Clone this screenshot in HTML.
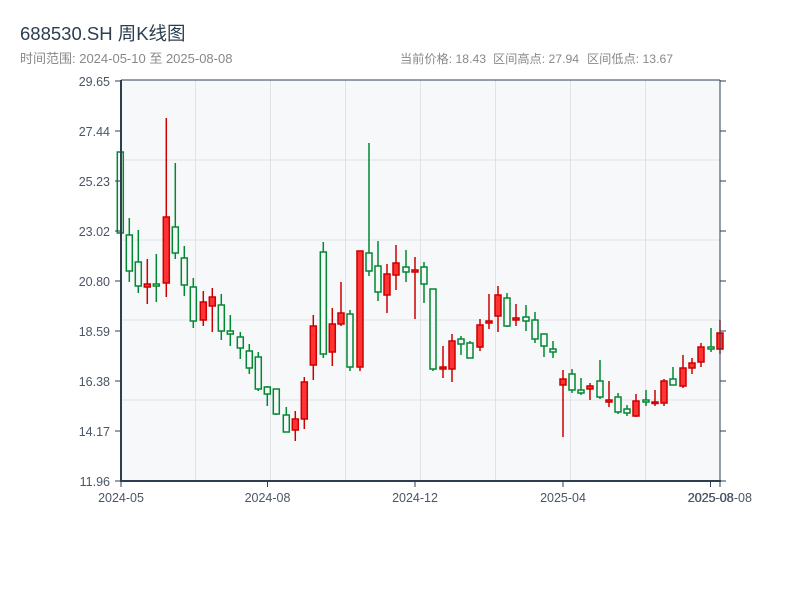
<!DOCTYPE html>
<html><head><meta charset="utf-8"><style>
html,body{margin:0;padding:0;background:#fff;width:800px;height:600px;overflow:hidden}
</style></head><body>
<svg width="800" height="600" xmlns="http://www.w3.org/2000/svg" style="position:absolute;left:0;top:0">
<text x="20" y="40" font-family="Liberation Sans, Noto Sans CJK SC, sans-serif" font-size="18.5" fill="#2c3e50">688530.SH 周K线图</text>
<text x="20" y="63" font-family="Liberation Sans, Noto Sans CJK SC, sans-serif" font-size="13" fill="#888">时间范围: 2024-05-10 至 2025-08-08</text>
<g font-family="Liberation Sans, Noto Sans CJK SC, sans-serif" font-size="12.2" fill="#888">
<text x="400" y="63">当前价格: 18.43</text>
<text x="493" y="63">区间高点: 27.94</text>
<text x="587" y="63">区间低点: 13.67</text>
</g>
<rect x="121" y="80" width="599" height="401" fill="#f7f8fa"/>
<g stroke="#e0e2e6" stroke-width="1">
<line x1="121" y1="160" x2="720" y2="160"/><line x1="121" y1="240" x2="720" y2="240"/><line x1="121" y1="320" x2="720" y2="320"/><line x1="121" y1="400" x2="720" y2="400"/>
<line x1="195.5" y1="80" x2="195.5" y2="481"/><line x1="270.5" y1="80" x2="270.5" y2="481"/><line x1="345.5" y1="80" x2="345.5" y2="481"/><line x1="420.5" y1="80" x2="420.5" y2="481"/><line x1="495.5" y1="80" x2="495.5" y2="481"/><line x1="570.5" y1="80" x2="570.5" y2="481"/><line x1="645.5" y1="80" x2="645.5" y2="481"/>
</g>
<g id="c"></g>
<g stroke="#2c3e50" fill="none">
<line x1="121" y1="80" x2="121" y2="482" stroke-width="2"/>
<line x1="120" y1="481" x2="721" y2="481" stroke-width="2"/>
<line x1="121" y1="80" x2="720" y2="80" stroke-width="1"/>
<line x1="720" y1="80" x2="720" y2="482" stroke-width="1"/>
</g>
<g stroke="#2c3e50" stroke-width="1">
<line x1="115" y1="81" x2="121" y2="81"/><line x1="115" y1="131" x2="121" y2="131"/><line x1="115" y1="181" x2="121" y2="181"/><line x1="115" y1="231" x2="121" y2="231"/><line x1="115" y1="281" x2="121" y2="281"/><line x1="115" y1="331" x2="121" y2="331"/><line x1="115" y1="381" x2="121" y2="381"/><line x1="115" y1="431" x2="121" y2="431"/><line x1="115" y1="481" x2="121" y2="481"/>
<line x1="720" y1="81" x2="726" y2="81"/><line x1="720" y1="131" x2="726" y2="131"/><line x1="720" y1="181" x2="726" y2="181"/><line x1="720" y1="231" x2="726" y2="231"/><line x1="720" y1="281" x2="726" y2="281"/><line x1="720" y1="331" x2="726" y2="331"/><line x1="720" y1="381" x2="726" y2="381"/><line x1="720" y1="431" x2="726" y2="431"/><line x1="720" y1="481" x2="726" y2="481"/>
<line x1="121" y1="481" x2="121" y2="487"/><line x1="267.5" y1="481" x2="267.5" y2="487"/><line x1="415" y1="481" x2="415" y2="487"/><line x1="563" y1="481" x2="563" y2="487"/><line x1="710.5" y1="481" x2="710.5" y2="487"/><line x1="720" y1="481" x2="720" y2="487"/>
</g>
<g font-family="Liberation Sans, sans-serif" font-size="12.5" fill="#4a5566" text-anchor="end">
<text x="110" y="86">29.65</text><text x="110" y="136">27.44</text><text x="110" y="186">25.23</text><text x="110" y="236">23.02</text><text x="110" y="286">20.80</text><text x="110" y="336">18.59</text><text x="110" y="386">16.38</text><text x="110" y="436">14.17</text><text x="110" y="486">11.96</text>
</g>
<g font-family="Liberation Sans, sans-serif" font-size="12.5" fill="#4a5566" text-anchor="middle">
<text x="121" y="502">2024-05</text><text x="267.5" y="502">2024-08</text><text x="415" y="502">2024-12</text><text x="563" y="502">2025-04</text><text x="710.5" y="502">2025-08</text><text x="720" y="502">2025-08-08</text>
</g>
</svg>
<script>
var d=[
[120.3,'G',152,233,152,233],[129.3,'G',235,271,218,282],[138.3,'G',262,286,230,293],[147.3,'R',284,287,259,304],[156.3,'G',284,286,254,302],[166.3,'R',217,283,118,297],[175.3,'G',227,253,163,259],[184.3,'G',258,285,246,296],[193.3,'G',287,321,278,328],[203.3,'R',302,320,291,326],[212.3,'R',297,306,288,332],[221.3,'G',305,331,294,340],[230.3,'G',331,334,315,346],[240.3,'G',337,348,332,359],[249.3,'G',351,368,344,374],[258.3,'G',357,389,352,391],[267.3,'G',387,394,386,406],[276.3,'G',389,414,389,415],[286.3,'G',415,432,407,432],[295.3,'R',419,430,411,441],[304.3,'R',382,419,377,429],[313.3,'R',326,365,315,380],[323.3,'G',252,354,242,358],[332.3,'R',324,352,308,366],[341,'R',313,324,282,326],[350,'G',314,367,310,371],[360,'R',251,367,251,371],[369,'G',253,271,143,276],[378,'G',266,292,241,301],[387,'R',274,295,264,313],[396,'R',263,275,245,290],[406,'G',267,272,250,282],[415,'R',270,272,257,319],[424,'G',267,284,262,303],[433,'G',289,369,289,371],[443,'R',367,369,346,378],[452,'R',341,369,334,382],[461,'G',339,344,336,355],[470,'G',343,358,341,358],[480,'R',325,347,319,351],[489,'R',321,323,294,329],[498,'R',295,316,286,332],[507,'G',298,326,293,327],[516,'R',318,320,304,326],[526,'G',317,321,305,331],[535,'G',320,339,312,343],[544,'G',334,346,334,357],[553,'G',349,352,341,358],
[563,'R',379,385,370,437],[572,'G',374,390,369,393],[581,'G',390,393,378,395],[590,'R',386,389,383,400],[600,'G',381,397,360,399],[609,'R',400,402,381,407],[618,'G',397,412,393,414],[627,'G',409,413,405,416],[636,'R',401,416,394,417],[646,'G',400,402,390,406],[655,'R',402,403,390,406],[664,'R',381,403,379,406],[673,'G',379,385,367,385],[683,'R',368,386,355,388],[692,'R',363,368,358,374],[701,'R',347,362,343,367],[711,'G',347,349,328,352],[720,'R',333,349,320,354]];
var s='';
d.forEach(function(c){var x=c[0],up=c[1]=='R',col=up?'#cc0000':'#008833',fill=up?'#ff3333':'#f7f8fa';
s+='<line x1="'+x+'" y1="'+c[4]+'" x2="'+x+'" y2="'+c[5]+'" stroke="'+col+'" stroke-width="1.5"/>';
var h=Math.max(c[3]-c[2],1.5);
s+='<rect x="'+(x-3)+'" y="'+c[2]+'" width="6" height="'+h+'" fill="'+fill+'" stroke="'+col+'" stroke-width="1.5"/>';});
document.getElementById('c').innerHTML=s;
</script>
</body></html>
